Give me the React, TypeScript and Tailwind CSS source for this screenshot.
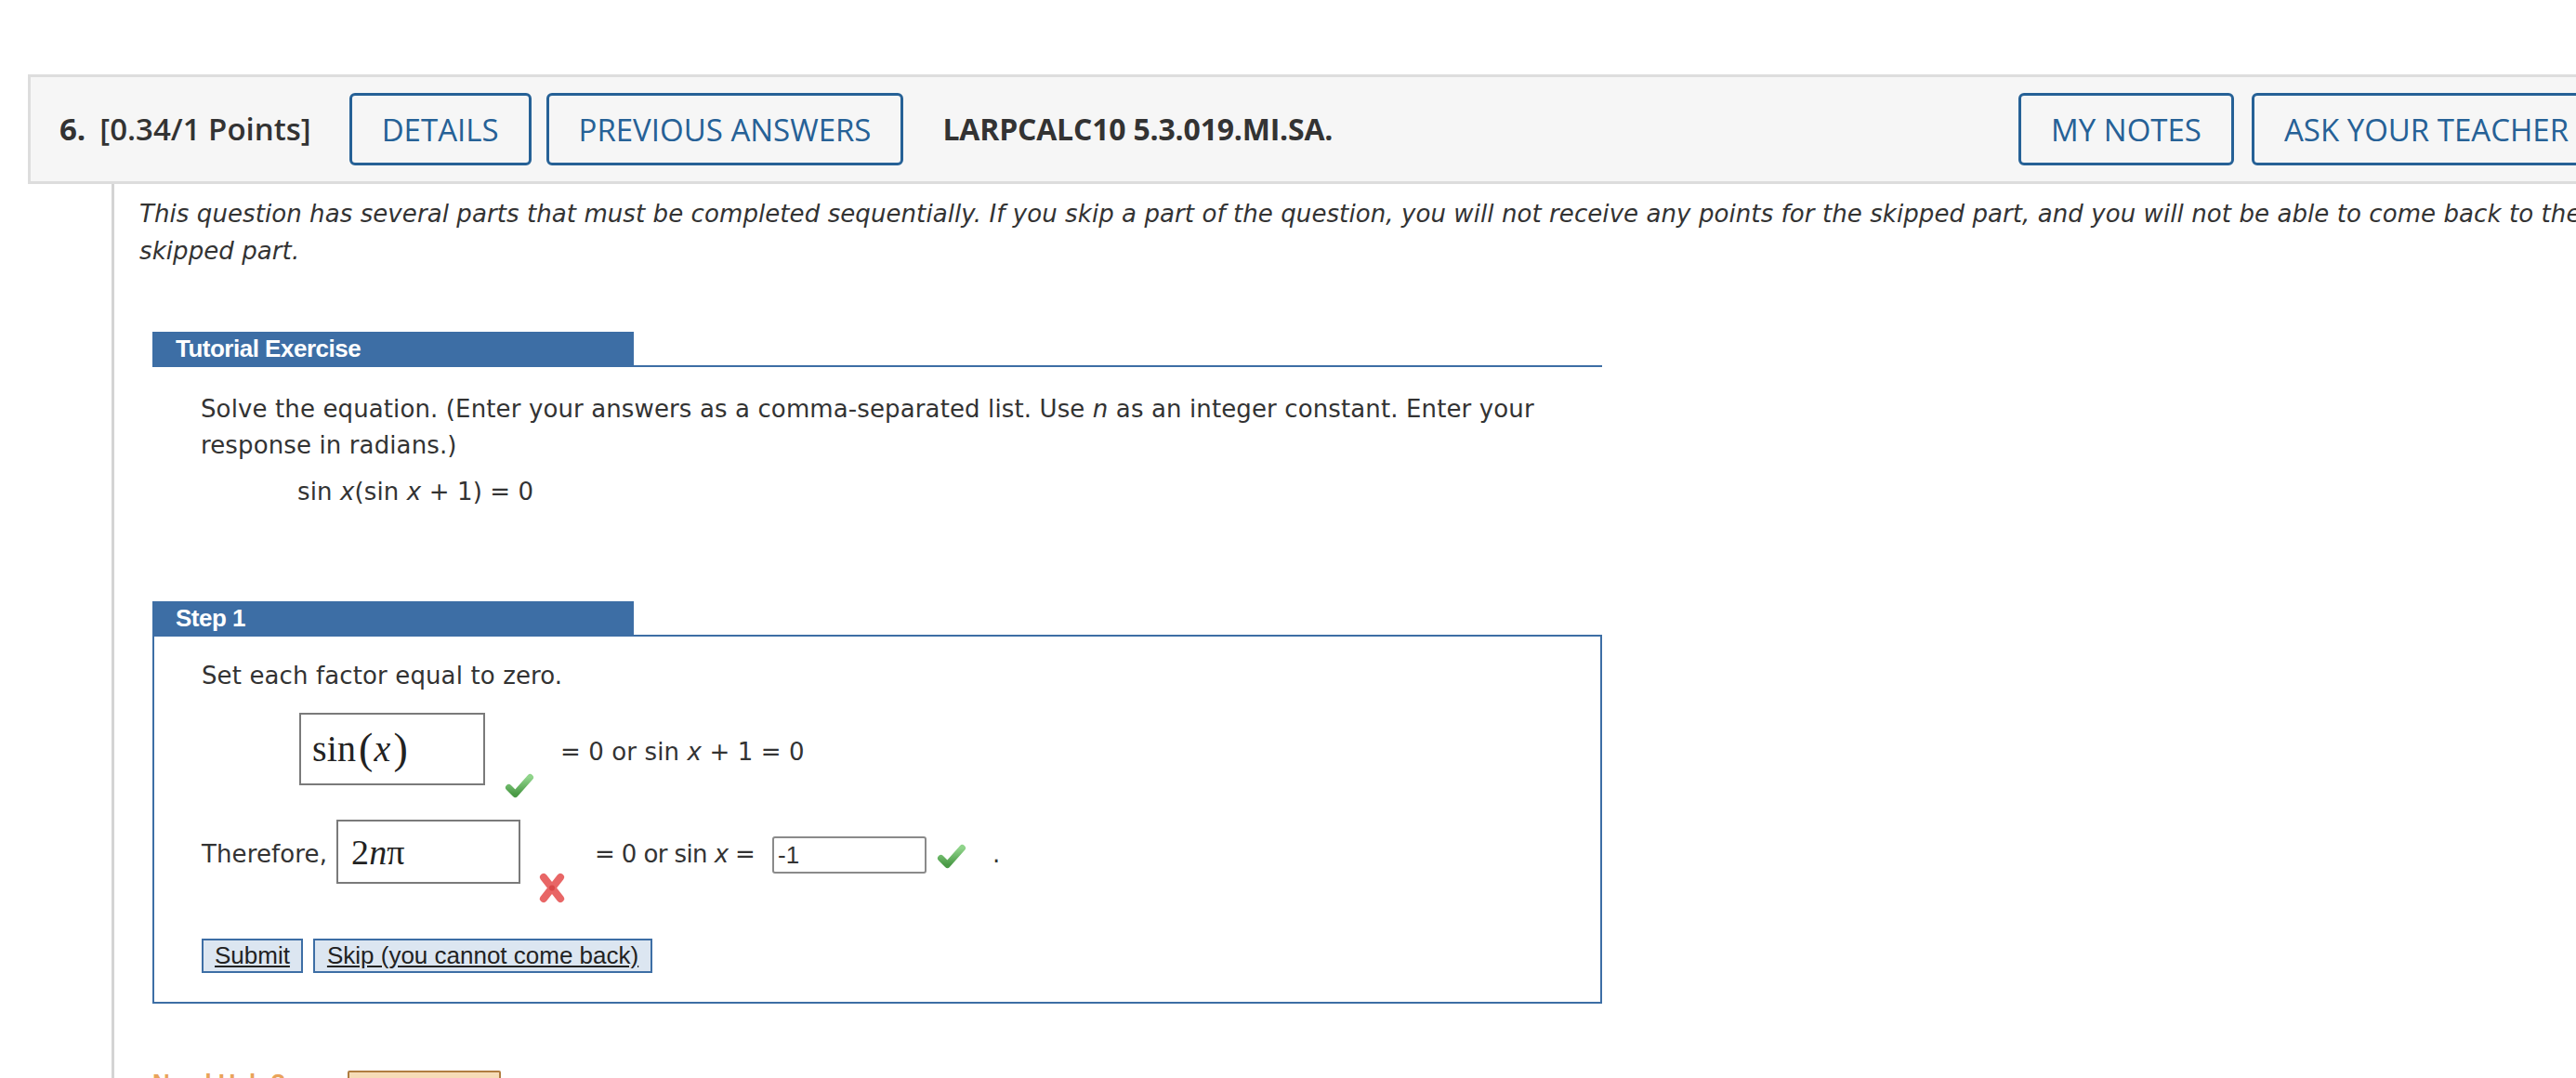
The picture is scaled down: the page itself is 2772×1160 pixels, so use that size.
import React from 'react';

function Check() {
  return (
    <svg viewBox="0 0 32 30" className="w-[32px] h-[30px]">
      <defs>
        <linearGradient id="chk" x1="0" y1="0" x2="0" y2="1">
          <stop offset="0" stopColor="#90d48b" />
          <stop offset="1" stopColor="#4a9a46" />
        </linearGradient>
      </defs>
      <path
        d="M4.5 16.5 L11.5 23.5 L27.5 5.5"
        fill="none"
        stroke="url(#chk)"
        strokeWidth="7"
        strokeLinecap="round"
        strokeLinejoin="round"
      />
    </svg>
  );
}

function Cross() {
  return (
    <svg viewBox="0 0 28 33" className="w-[28px] h-[33px]">
      <g stroke="#e86666" strokeWidth="8" strokeLinecap="round">
        <line x1="5" y1="5" x2="23" y2="28" />
        <line x1="23" y1="5" x2="5" y2="28" />
      </g>
      <circle cx="14" cy="16.5" r="3" fill="#d94848" />
    </svg>
  );
}

function HeaderButton({ children }: { children: React.ReactNode }) {
  return (
    <button className="h-[78px] px-[32px] border-[3px] border-[#266196] rounded-[6px] text-[33px] text-[#266196] leading-none whitespace-nowrap bg-transparent">
      {children}
    </button>
  );
}

function Tab({ label }: { label: string }) {
  return (
    <div className="w-[518px] h-[36px] bg-[#3d6ea5] pl-[25px] text-white text-[26px] leading-[36px] font-bold font-['Liberation_Sans',Arial,sans-serif] tracking-[-0.5px]">
      {label}
    </div>
  );
}

export default function App() {
  return (
    <div className="w-[2772px] h-[1160px] overflow-hidden bg-white text-[#333333]">
      <div className="pt-[80px] pl-[30px]">
        {/* question header */}
        <header className="flex items-center w-[2802px] h-[118px] border-[3px] border-[#dddddd] bg-[#f6f6f6] pl-[31px] pr-[30px] font-['Open_Sans',sans-serif]">
          <span className="text-[33px] font-bold">6.</span>
          <span className="ml-[15px] text-[33px] font-semibold whitespace-nowrap">[0.34/1 Points]</span>
          <div className="ml-[41px] flex gap-[16px]">
            <HeaderButton>DETAILS</HeaderButton>
            <HeaderButton>PREVIOUS ANSWERS</HeaderButton>
          </div>
          <span className="ml-[42px] text-[32px] font-bold whitespace-nowrap tracking-[-0.2px]">LARPCALC10 5.3.019.MI.SA.</span>
          <div className="ml-auto flex gap-[19px]">
            <HeaderButton>MY NOTES</HeaderButton>
            <HeaderButton>ASK YOUR TEACHER</HeaderButton>
          </div>
        </header>

        <div className="ml-[90px] border-l-[3px] border-[#d4d4d4] pl-[27px] pt-[12px] h-[1000px] font-['DejaVu_Sans',Verdana,sans-serif] text-[26px] tracking-[0.12px]">
          <p className="italic leading-[40px] whitespace-nowrap tracking-[0.08px]">
            This question has several parts that must be completed sequentially. If you skip a part of the question, you will not receive any points for the skipped part, and you will not be able to come back to the
            <br />
            skipped part.
          </p>

          {/* tutorial */}
          <div className="mt-[67px] ml-[14px] w-[1560px]">
            <div className="border-b-2 border-[#3d6ea5]">
              <Tab label="Tutorial Exercise" />
            </div>
            <div className="pl-[52px] pt-[26px] leading-[39px]">
              <p className="whitespace-nowrap">
                Solve the equation. (Enter your answers as a comma-separated list. Use <i>n</i> as an integer constant. Enter your
                <br />
                response in radians.)
              </p>
              <p className="mt-[11px] ml-[104px] whitespace-nowrap">
                sin <i>x</i>(sin <i>x</i> + 1) = 0
              </p>
            </div>
          </div>

          {/* step 1 */}
          <div className="mt-[98px] ml-[14px] w-[1560px]">
            <Tab label="Step 1" />
            <div className="h-[397px] border-2 border-[#3d6ea5] pl-[51px] pt-[23px] leading-[39px]">
              <p>Set each factor equal to zero.</p>

              <div className="mt-[20px] flex items-start">
                <div className="ml-[105px] w-[200px] h-[78px] border-2 border-[#7a7a7a] flex items-center pl-[12px] font-['Liberation_Serif',serif] text-[#222]">
                  <span className="text-[40px] leading-none">sin</span>
                  <span className="text-[46px] leading-none ml-[3px]">(</span>
                  <span className="text-[40px] leading-none italic ml-[1px]">x</span>
                  <span className="text-[46px] leading-none ml-[3px]">)</span>
                </div>
                <div className="ml-[21px] mt-[64px]">
                  <Check />
                </div>
                <span className="ml-[28px] mt-[23px] whitespace-nowrap">
                  = 0 or sin <i>x</i> + 1 = 0
                </span>
              </div>

              <div className="mt-[21px] flex items-start">
                <span className="w-[145px] mt-[18px] whitespace-nowrap">Therefore,</span>
                <div className="w-[198px] h-[69px] border-2 border-[#7a7a7a] flex items-center pl-[14px] font-['Liberation_Serif',serif] text-[38px] leading-none text-[#222]">
                  2<i>n</i>π
                </div>
                <div className="ml-[20px] mt-[57px]">
                  <Cross />
                </div>
                <span className="ml-[32px] mt-[18px] w-[191px] whitespace-nowrap tracking-[-0.6px]">
                  = 0 or sin <i>x</i> =
                </span>
                <div className="mt-[18px] w-[166px] h-[40px] rounded-[3px] border-2 border-[#8a8a8a] pl-[4px] text-[26px] leading-[36px] font-['Liberation_Sans',Arial,sans-serif]">
                  -1
                </div>
                <div className="ml-[11px] mt-[25px]">
                  <Check />
                </div>
                <span className="ml-[28px] mt-[18px]">.</span>
              </div>

              <div className="mt-[38px] flex gap-[11px] font-['Liberation_Sans',Arial,sans-serif] tracking-normal">
                <button className="h-[37px] px-[12px] border-2 border-[#3d6ea5] bg-[#dce6f1] text-[26px] leading-[33px] underline text-[#222]">
                  Submit
                </button>
                <button className="h-[37px] px-[13px] border-2 border-[#3d6ea5] bg-[#dce6f1] text-[26px] leading-[33px] underline text-[#222] whitespace-nowrap">
                  Skip (you cannot come back)
                </button>
              </div>
            </div>
          </div>

          {/* need help */}
          <div className="mt-[72px] ml-[14px] flex items-start">
            <span className="w-[210px] text-[26px] leading-[26px] font-bold text-[#e9a35a] font-['Liberation_Sans',Arial,sans-serif] tracking-normal">
              Need Help?
            </span>
            <button className="w-[165px] h-[42px] border-2 border-[#b07d40] bg-[#f6dcb7] rounded-[2px] text-[24px] text-[#333]">
              Read It
            </button>
          </div>
        </div>
      </div>
    </div>
  );
}
